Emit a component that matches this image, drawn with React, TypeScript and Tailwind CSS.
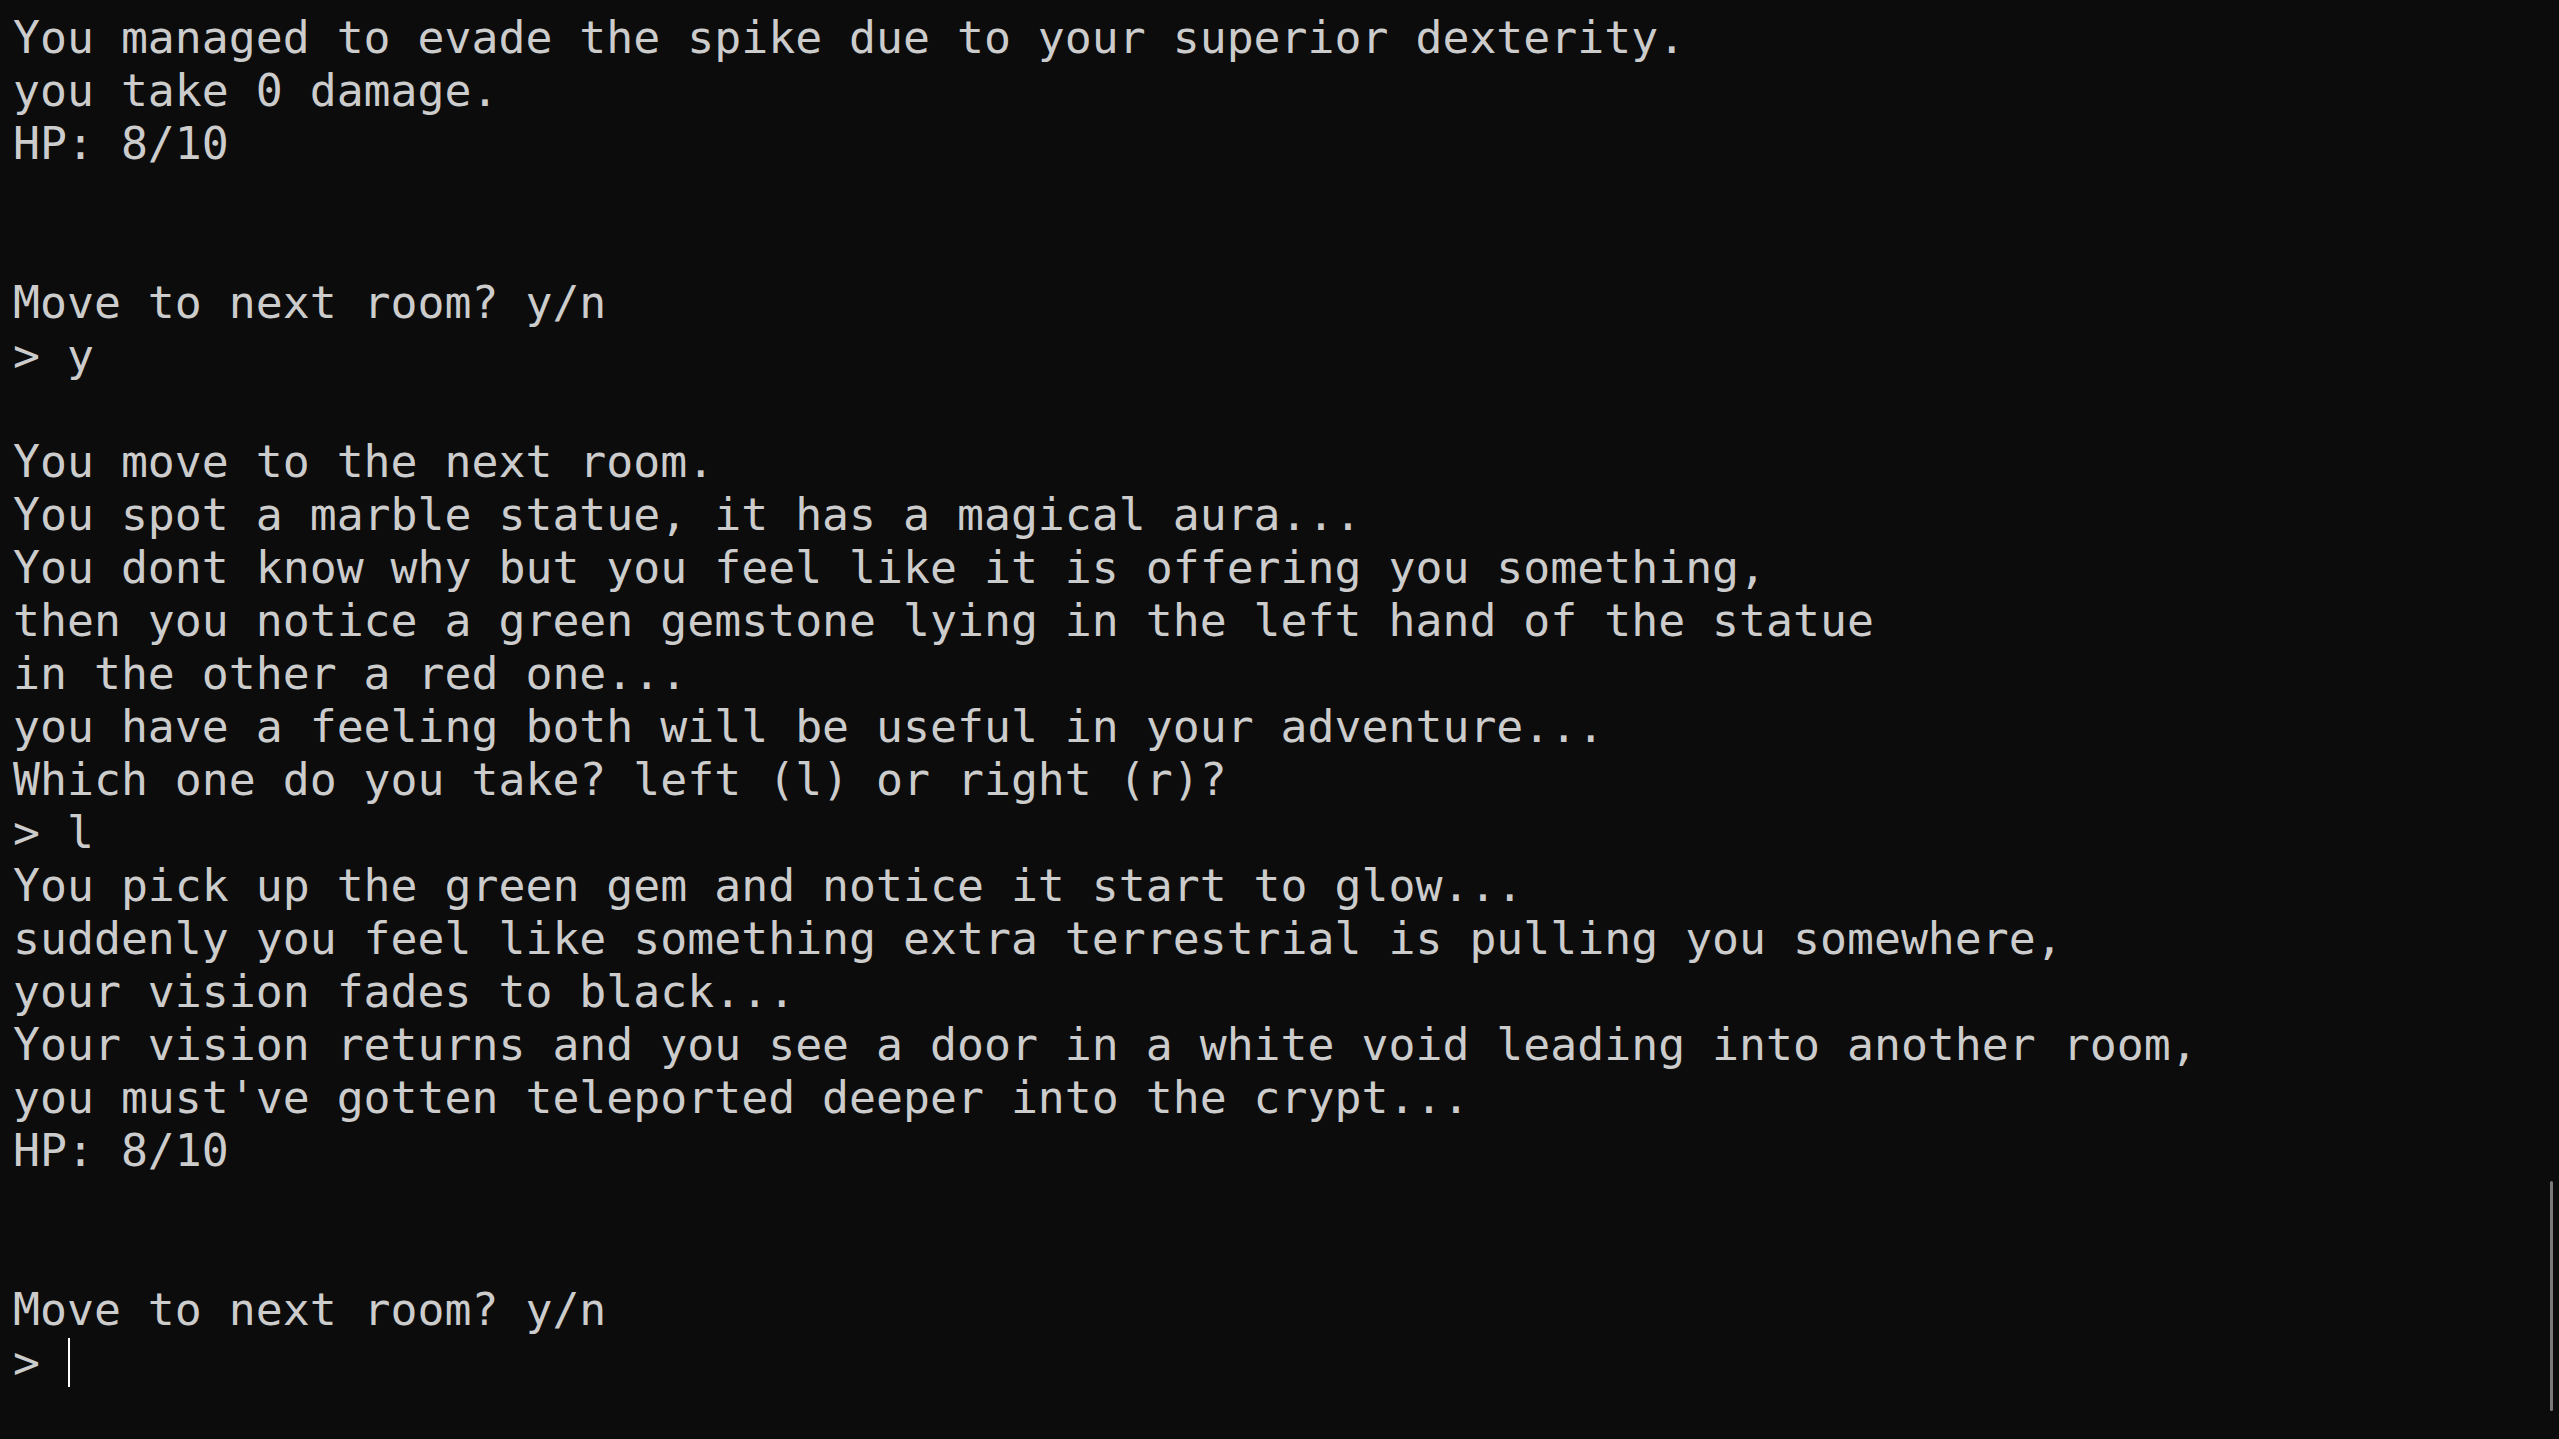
const lines: string[] = [
  "You managed to evade the spike due to your superior dexterity.",
  "you take 0 damage.",
  "HP: 8/10",
  "",
  "",
  "Move to next room? y/n",
  "> y",
  "",
  "You move to the next room.",
  "You spot a marble statue, it has a magical aura...",
  "You dont know why but you feel like it is offering you something,",
  "then you notice a green gemstone lying in the left hand of the statue",
  "in the other a red one...",
  "you have a feeling both will be useful in your adventure...",
  "Which one do you take? left (l) or right (r)?",
  "> l",
  "You pick up the green gem and notice it start to glow...",
  "suddenly you feel like something extra terrestrial is pulling you somewhere,",
  "your vision fades to black...",
  "Your vision returns and you see a door in a white void leading into another room,",
  "you must've gotten teleported deeper into the crypt...",
  "HP: 8/10",
  "",
  "",
  "Move to next room? y/n",
];

const Line = ({ text }: { text: string }) => (
  <div className="h-[53px] leading-[53px] whitespace-pre">{text}</div>
);

export default function App() {
  return (
    <div className="relative w-[2559px] h-[1439px] overflow-hidden bg-[#0c0c0c] text-[#cccccc] text-[44.8px] font-['DejaVu_Sans_Mono',monospace]">
      <div className="flex flex-col pl-[13px] pt-[11px]">
        {lines.map((l, i) => (
          <Line key={i} text={l} />
        ))}
        <div className="h-[53px] leading-[53px] whitespace-pre flex items-center">
          <span>{"> "}</span>
          <div className="ml-[1px] w-[2px] h-[49px] bg-white" />
        </div>
      </div>
      {/* scrollbar thumb */}
      <div className="absolute right-[6px] top-[1181px] w-[3px] h-[230px] rounded-full bg-[#7a7a7a]" />
    </div>
  );
}
